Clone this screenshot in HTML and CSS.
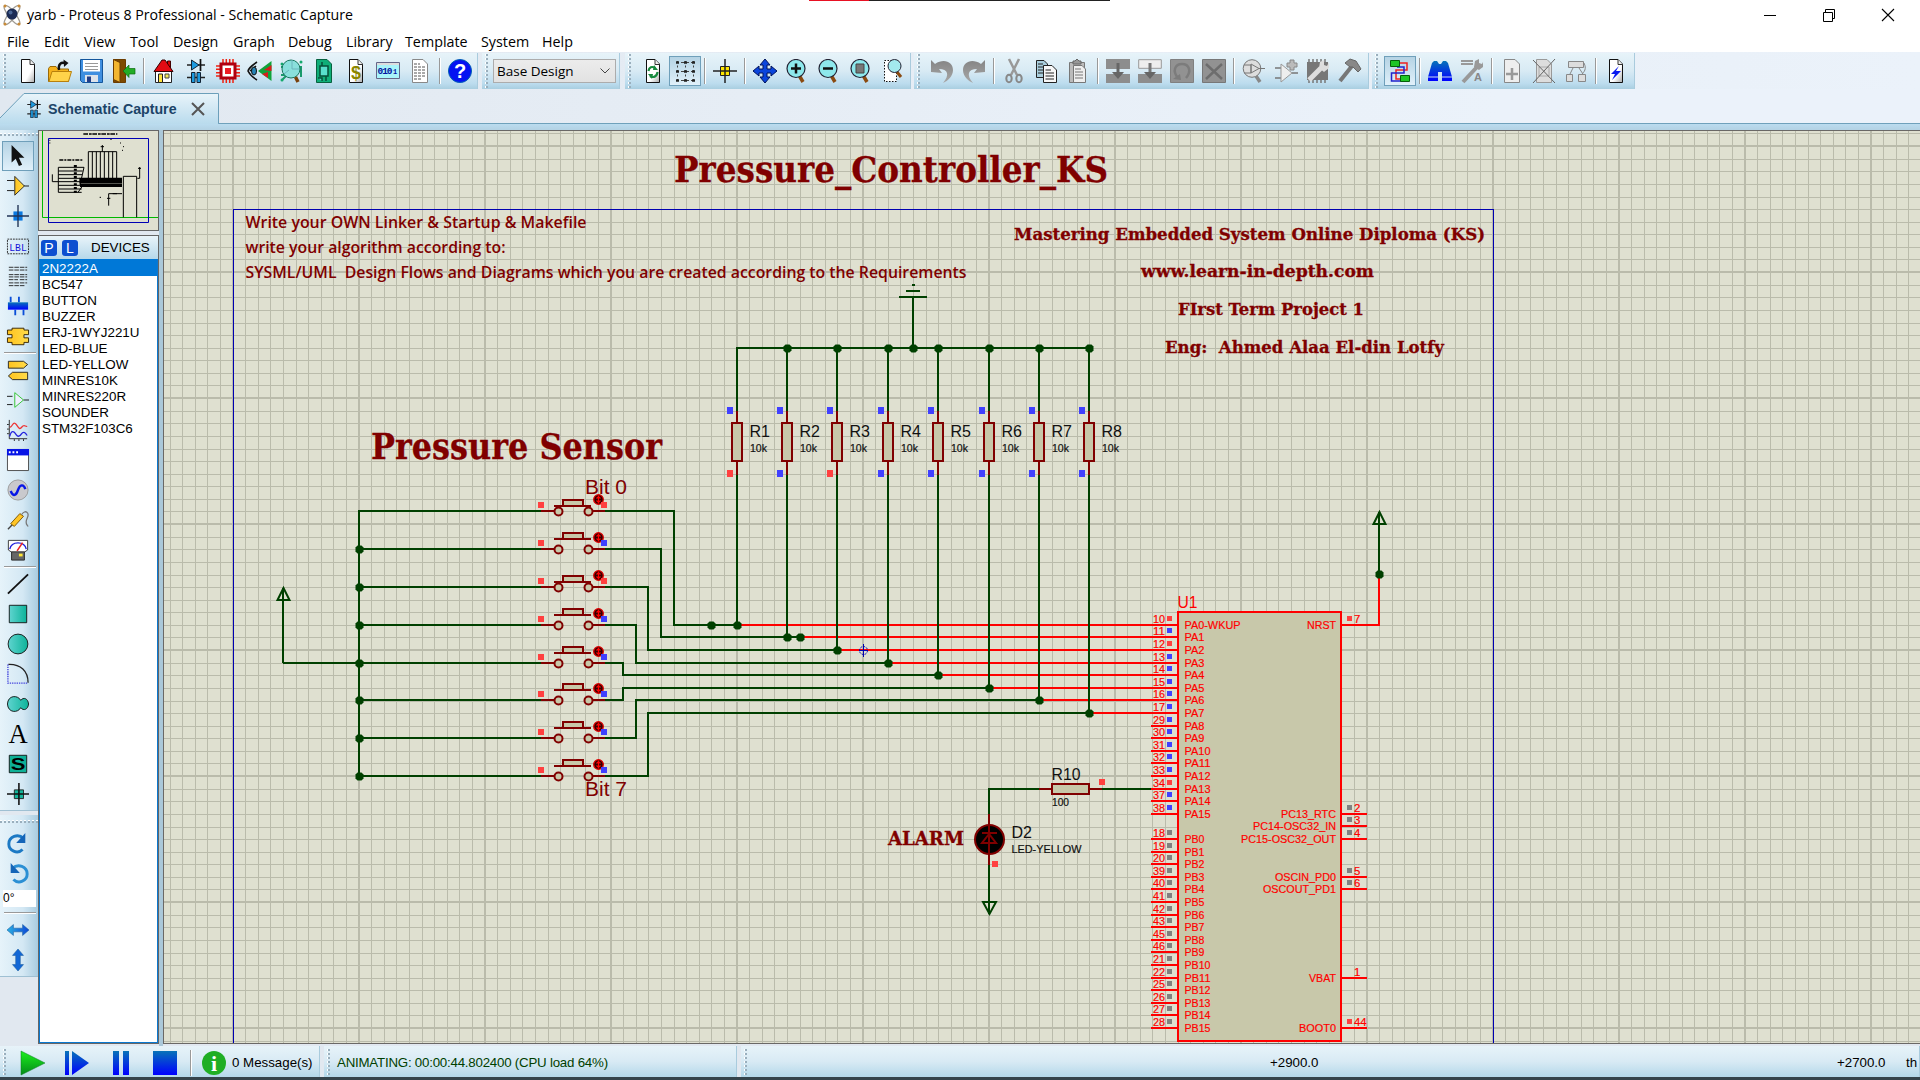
FILE: index.html
```html
<!DOCTYPE html>
<html lang="en">
<head>
<meta charset="utf-8">
<title>yarb - Proteus 8 Professional - Schematic Capture</title>
<link rel="stylesheet" href="styles.css">
</head>
<body>
<svg class="defs" width="0" height="0">
  <defs>
    <linearGradient id="teal"><stop offset="0" stop-color="#5fd4cf"/><stop offset="1" stop-color="#0db39a"/></linearGradient>
    <linearGradient id="gold"><stop offset="0" stop-color="#ffc31f"/><stop offset="1" stop-color="#ffdc4a"/></linearGradient>
    <linearGradient id="blueV" x2="0" y2="1"><stop offset="0" stop-color="#0873b8"/><stop offset="1" stop-color="#0000ff"/></linearGradient>
    <linearGradient id="blueH"><stop offset="0" stop-color="#2bb0e2"/><stop offset="1" stop-color="#0c47d6"/></linearGradient>
    <linearGradient id="greenV" x2="0" y2="1"><stop offset="0" stop-color="#1cf01c"/><stop offset="1" stop-color="#048a1a"/></linearGradient>
    <linearGradient id="grayV" x2="0" y2="1"><stop offset="0" stop-color="#858585"/><stop offset="1" stop-color="#a8a8a8"/></linearGradient>
    <linearGradient id="paper" x2="1" y2="1"><stop offset=".6" stop-color="#fff"/><stop offset="1" stop-color="#aaa"/></linearGradient>
    <symbol id="page" viewBox="0 0 24 24"><path d="M5.500.500H14L18.500 5V23.500H5.500Z" fill="url(#paper)" stroke="#111"/><path d="M14 .500V5.500H18.500" fill="#eee" stroke="#333"/></symbol>
    <symbol id="parts" viewBox="0 0 24 24"><path d="M3 6H21M3 18.500H21" stroke="#222" stroke-width="1.500"/><path d="M7.500 1V11L15 6Z" fill="#1d9be0" stroke="#123"/><path d="M16.500 0V12" stroke="#111" stroke-width="1.700"/><path d="M7.500 13.500H11V23.500H7.500ZM13 13.500H16.500V23.500H13Z" fill="#1d9be0" stroke="#123"/></symbol>
    <symbol id="lens" viewBox="0 0 24 24"><path d="M14.500 17L18 23" stroke="#8a4a10" stroke-width="3.500"/><circle cx="11" cy="9.500" r="9" fill="#8ee8ec" stroke="#223" stroke-width="1.200"/></symbol>
  </defs>
</svg>

<div class="app">
  <header class="titlebar">
    <svg class="logo" viewBox="0 0 20 22"><g fill="none" stroke="#a09c94" stroke-width="1.300"><ellipse cx="10" cy="11" rx="12" ry="3.500" transform="rotate(52 10 11)"/><ellipse cx="10" cy="11" rx="12" ry="3.500" transform="rotate(-52 10 11)"/></g><circle cx="10" cy="10" r="5.500" fill="#1c2c55"/><circle cx="8.500" cy="8.500" r="2" fill="#4a6797"/><g fill="#c98a35"><circle cx="3" cy="2" r="1.500"/><circle cx="17" cy="2" r="1.500"/><circle cx="3" cy="20" r="1.500"/><circle cx="17" cy="20" r="1.500"/></g></svg>
    <span class="caption">yarb - Proteus 8 Professional - Schematic Capture</span>
    <div class="winbtns">
      <svg viewBox="0 0 14 14"><path d="M1 7.500H13" stroke="#000"/></svg>
      <svg viewBox="0 0 14 14"><path d="M1.500 4.500H10.500V13.500H1.500ZM3.500 4V1.500H12.500V10.500H11" fill="none" stroke="#000"/></svg>
      <svg viewBox="0 0 14 14"><path d="M1 1L13 13M13 1L1 13" stroke="#000" stroke-width="1.100"/></svg>
    </div>
    <div class="recorder"></div>
  </header>
  <nav class="menu"><span>File</span><span>Edit</span><span>View</span><span>Tool</span><span>Design</span><span>Graph</span><span>Debug</span><span>Library</span><span>Template</span><span>System</span><span>Help</span></nav>

  <div class="toolbar">
    <div class="group g1"><i class="grip"></i>
      <b><svg viewBox="0 0 24 24"><use href="#page"/></svg></b>
      <b><svg viewBox="0 0 24 24"><path d="M.500 22.500V9.500L2 7.500H8L10 10H20.500V22.500Z" fill="#f5b21c" stroke="#9a6a08"/><path d="M1 22.500L4 12.500H23.500L20.500 22.500Z" fill="#ffd34a" stroke="#b8800c"/><path d="M11 11C10 5 13 3 17 4" fill="none" stroke="#111" stroke-width="2.400"/><path d="M15.500.500L20.500 4L16 8Z" fill="#111"/></svg></b>
      <b><svg viewBox="0 0 24 24"><path d="M.500.500H22.500V23.500H2.500L.500 21.500Z" fill="#3f8fe0" stroke="#14569c"/><path d="M3 1H20V12.500H3Z" fill="#fff"/><path d="M5 4.500H18M5 7.500H18M5 10.500H18" stroke="#999"/><path d="M5 16H18V23H5Z" fill="#dde3ea"/><path d="M7 17.500H11V23H7Z" fill="#223e88"/></svg></b>
      <b><svg viewBox="0 0 24 24"><path d="M1.500.500H13.500V23.500H1.500Z" fill="#7d4a00" stroke="#6b3c00"/><path d="M1.500.500L8 3.500V23.500L1.500 20.500Z" fill="#f2b630" stroke="#6b3c00"/><path d="M11 12L17 6V9.500H23V15H17V18.500Z" fill="#22ad26" stroke="#0b6b10" stroke-width=".7"/></svg></b>
      <u></u>
      <b><svg viewBox="0 0 24 24"><path d="M15.500 2H18.500V9H15.500Z" fill="#d00" stroke="#400"/><path d="M3.500 12H19.500V23.500H3.500Z" fill="#fff" stroke="#222"/><path d="M2 12.500L10 1H13L21 12.500Z" fill="#e30b13" stroke="#300"/><path d="M6.500 15H10.500V23.500H6.500Z" fill="#ffe23a" stroke="#222"/><path d="M13 15H17V19H13Z" fill="#f5e858" stroke="#444"/></svg></b>
      <b><svg viewBox="0 0 24 24"><use href="#parts"/></svg></b>
      <b><svg viewBox="0 0 24 24"><path d="M7 0V24M10.300 0V24M13.700 0V24M17 0V24M0 7H24M0 10.300H24M0 13.700H24M0 17H24" stroke="#e21" stroke-width="1.500"/><path d="M5 5H19V19H5Z" fill="#fff" stroke="#b00010" stroke-width="3"/><path d="M9 9H15V15H9Z" fill="#ee1c24"/></svg></b>
      <b><svg viewBox="0 0 24 24"><path d="M23.500 2V22L10 12Z" fill="#10a33a"/><path d="M23.500 6L16 11L23.500 12ZM14 15L20 13V19Z" fill="#d81c1c"/><path d="M9 3C3 7 0 11 0 12C1 14 4 18 9 21M2 12L8 7" fill="none" stroke="#111" stroke-width="1.600"/><ellipse cx="6" cy="12" rx="2.500" ry="4" fill="#2684b6" stroke="#111"/></svg></b>
      <b><svg viewBox="0 0 24 24"><path d="M1 8H5M1 16H6M2 21L6 17M21 7V18" stroke="#199a6b" stroke-width="2"/><circle cx="2" cy="5" r="1.500" fill="#14a96d"/><circle cx="21" cy="3" r="1.500" fill="#14a96d"/><circle cx="2" cy="21" r="1.500" fill="#14a96d"/><circle cx="11" cy="10" r="9" fill="#8adfdc" stroke="#18765e"/><path d="M12 1V10H19M4 15L9 11" fill="none" stroke="#6db4bd"/><path d="M15.500 18L18 23" stroke="#79410d" stroke-width="3.500"/></svg></b>
      <b><svg viewBox="0 0 24 24"><path d="M4.500.500H15L19.500 5V23.500H4.500Z" fill="#0fae78" stroke="#07623f"/><path d="M8 7H16V17H8ZM10 3V7M14 17V22M6 19H10V22" fill="#59dfcd" stroke="#064f38" stroke-width="1.500"/></svg></b>
      <b><svg viewBox="0 0 24 24"><use href="#page"/><text x="12" y="20" text-anchor="middle" font-size="18" class="bold" fill="#8c8600">$</text></svg></b>
      <b><svg viewBox="0 0 24 24"><path d="M.500 3.500H23.500V19.500H.500Z" fill="#a9f4fa" stroke="#668"/><path d="M1 4H23V6H1Z" fill="#ddd"/><text x="1.500" y="15" font-size="9.500" textLength="15" class="mono" fill="#0414a0">010</text><text x="17" y="15" font-size="7" textLength="5" class="mono" fill="#0414a0">1</text></svg></b>
      <b><svg viewBox="0 0 24 24"><path d="M4.500.500H15L19.500 5V23.500H4.500Z" fill="#fff" stroke="#888"/><path d="M6 5H12M6 8H17M6 11H17M6 14H17M6 17H17M6 20H13" stroke="#555" stroke-dasharray="3 1"/></svg></b>
      <u></u>
      <b><svg viewBox="0 0 24 24"><circle cx="12" cy="12" r="11.500" fill="#0412f2" stroke="#0060b4"/><text x="12" y="19" text-anchor="middle" font-size="20" class="bold" fill="#fff">?</text></svg></b>
    </div>
    <div class="group g2"><i class="grip"></i><div class="combo"><span>Base Design</span><svg viewBox="0 0 10 6"><path d="M.500.500L5 5L9.500.500" fill="none" stroke="#444"/></svg></div></div>
    <div class="group g3"><i class="grip"></i>
      <b><svg viewBox="0 0 24 24"><use href="#page"/><path d="M7.500 12C8 8 11 7 14 9M16.500 13C16 18 12 19 9 17" fill="none" stroke="#188a3e" stroke-width="2.200"/><path d="M13 6L17 11H12ZM11 20L7 15H12Z" fill="#188a3e"/></svg></b>
      <b class="on"><svg viewBox="0 0 24 24"><path d="M3 3.500H22M3 12.500H22M3 21.500H22" stroke="#444" stroke-dasharray="3 2"/><path d="M4.500 2V23M12.500 2V23M20.500 2V23" stroke="#444" stroke-dasharray="2 2.500"/><path d="M3 3.500H6M11 3.500H14M19 3.500H22M3 12.500H6M11 12.500H14M19 12.500H22M3 21.500H6M11 21.500H14M19 21.500H22" stroke="#222" stroke-width="2.500"/></svg></b>
      <u></u>
      <b><svg viewBox="0 0 24 24"><path d="M7.500 7.500H16.500V16.500H7.500Z" fill="#ffe600" stroke="#222"/><path d="M12 0V24M0 12H24" stroke="#222" stroke-width="1.500"/></svg></b>
      <u></u>
      <b><svg viewBox="0 0 24 24"><path d="M12 0L17 6H14V10H18V7L24 12L18 17V14H14V18H17L12 24L7 18H10V14H6V17L0 12L6 7V10H10V6H7Z" fill="#0b45dc" stroke="#00125a"/></svg></b>
      <b><svg viewBox="0 0 24 24"><use href="#lens"/><path d="M6 9.500H16M11 4.500V14.500" stroke="#111" stroke-width="2.500"/></svg></b>
      <b><svg viewBox="0 0 24 24"><use href="#lens"/><path d="M6 9.500H16" stroke="#111" stroke-width="2.500"/></svg></b>
      <b><svg viewBox="0 0 24 24"><use href="#lens"/><path d="M7 5H15V14H7Z" fill="#777" stroke="#444"/></svg></b>
      <b><svg viewBox="0 0 24 24"><path d="M3.500 1.500H15.500V22.500H3.500Z" fill="#fff" stroke="#111" stroke-dasharray="1.500 1.500"/><path d="M16 13L20 18" stroke="#8a4a10" stroke-width="3"/><circle cx="13.500" cy="7" r="6.500" fill="#a3e9ee" stroke="#223"/></svg></b>
    </div>
    <div class="group g4"><i class="grip"></i>
      <b><svg viewBox="0 0 24 24"><path d="M1 1L5 5C14-1 23 3 23 11C23 17 18 22 13 24C20 16 18 10 9 10L12 14L1 13Z" fill="url(#grayV)"/></svg></b>
      <b><svg viewBox="0 0 24 24"><path d="M23 1L19 5C10-1 1 3 1 11C1 17 6 22 11 24C4 16 6 10 15 10L12 14L23 13Z" fill="url(#grayV)"/></svg></b>
      <u></u>
      <b><svg viewBox="0 0 24 24"><path d="M7 0L15 16M17 0L9 16" stroke="#999" stroke-width="2.500"/><g fill="none" stroke="#888" stroke-width="2"><ellipse cx="7" cy="19.500" rx="2.700" ry="3.700"/><ellipse cx="17" cy="19.500" rx="2.700" ry="3.700"/></g></svg></b>
      <b><svg viewBox="0 0 24 24"><g stroke="#222"><path d="M2.500 1.500H10L13.500 5V18.500H2.500Z" fill="#a9cedd"/><path d="M4 5H9M4 8H11M4 11H11M4 14H11"/><path d="M9.500 6.500H18L22.500 11V23.500H9.500Z" fill="#f7f7f7"/><path d="M11.500 11H17M11.500 14H20M11.500 17H20M11.500 20H20"/></g></svg></b>
      <b><svg viewBox="0 0 24 24"><path d="M3.500 3.500H18.500V23.500H3.500Z" fill="#bbb" stroke="#777"/><path d="M7 5V2H9L11 0L13 2H15V5Z" fill="#999" stroke="#666"/><path d="M7.500 6.500H16L19.500 10V23.500H7.500Z" fill="#eee" stroke="#777"/><path d="M9 10H15M9 13H17M9 16H17M9 19H17" stroke="#777"/></svg></b>
      <u></u>
      <b><svg viewBox="0 0 24 24"><path d="M0 0H24V10H0ZM0 15H24V24H0Z" fill="#8d8d8d"/><path d="M12 4V14" stroke="#666" stroke-width="3"/><path d="M6 13H18L12 20Z" fill="#666"/></svg></b>
      <b><svg viewBox="0 0 24 24"><path d="M.700.700H23.300V9.300H.700Z" fill="#eee" stroke="#999"/><path d="M0 15H24V24H0Z" fill="#8d8d8d"/><path d="M12 4V14" stroke="#777" stroke-width="3"/><path d="M6 13H18L12 20Z" fill="#666"/></svg></b>
      <b><svg viewBox="0 0 24 24"><path d="M.500.500H23.500V23.500H.500Z" fill="#929292" stroke="#808080"/><path d="M8 19C2 12 5 5 12 5S22 12 16 19" fill="none" stroke="#7c7c7c" stroke-width="2.500"/><path d="M3 20L11 21L10 15Z" fill="#7c7c7c"/></svg></b>
      <b><svg viewBox="0 0 24 24"><path d="M.500.500H23.500V23.500H.500Z" fill="#929292" stroke="#777"/><path d="M4 5L20 20M20 5L4 20" stroke="#6d6d6d" stroke-width="2.500"/></svg></b>
      <u></u>
      <b><svg viewBox="0 0 24 24"><path d="M14 17L18 23" stroke="#888" stroke-width="3.500"/><circle cx="10" cy="9.500" r="8.800" fill="#ddd" stroke="#777"/><path d="M2 6H9V14H2M9 5L17 9.500L9 14ZM17 9.500H23" fill="none" stroke="#777"/></svg></b>
      <b><svg viewBox="0 0 24 24"><path d="M1 9H7M1 19H7M18 14H24" stroke="#777" stroke-width="1.500"/><path d="M7 5V23L18 14Z" fill="#eee" stroke="#999"/><path d="M16 1H20V4H23V8H20V11H16V8H13V4H16Z" fill="#bbb" stroke="#888"/></svg></b>
      <b><svg viewBox="0 0 24 24"><path d="M3 0V24M7 0V24M11 0V24M15 0V24M19 0V24" stroke="#777" stroke-width="1.500"/><path d="M1 3H22V21H1Z" fill="#777"/><path d="M3 21L15 9" stroke="#ddd" stroke-width="5"/><path d="M13 9L14 3L18 1V6L21 7L23 3V9L18 13Z" fill="#ddd"/></svg></b>
      <b><svg viewBox="0 0 24 24"><path d="M2 22L14 7" stroke="#777" stroke-width="4"/><path d="M7 4L12 0L18 2L23 10L20 13L15 8L12 8Z" fill="#888" stroke="#666"/></svg></b>
    </div>
    <div class="group g5"><i class="grip"></i>
      <b class="on"><svg viewBox="0 0 24 24"><path d="M10 4H19V11H8V20H13" fill="none" stroke="#e22" stroke-width="1.500"/><path d="M9 8H16V14H3.500V22H13" fill="none" stroke="#22c" stroke-width="1.500"/><path d="M2.500 1.500H11.500V7.500H2.500ZM12.500 16.500H21.500V22.500H12.500Z" fill="#1fc626" stroke="#055e0a"/></svg></b>
      <u></u>
      <b><svg viewBox="0 0 24 24"><path d="M0 18L4 4L6 2H9L11 5H13L15 2H18L20 4L24 18V22H14V13H10V22H0Z" fill="url(#blueV)"/><path d="M0 18H10M14 18H24" stroke="#cde"/></svg></b>
      <b><svg viewBox="0 0 24 24"><path d="M1 2H13M1 5H13" stroke="#999" stroke-width="2.200"/><path d="M3 23L17 8" stroke="#999" stroke-width="4"/><path d="M14 8L15 2L19 0V4L22 5L23 3V8L19 11Z" fill="#999"/><text x="14" y="22" font-size="11" class="bold" fill="#888">A</text></svg></b>
      <u></u>
      <b><svg viewBox="0 0 24 24"><path d="M4.500.500H15L19.500 5V23.500H4.500Z" fill="#eee" stroke="#888"/><path d="M12 9V21M6 15H18" stroke="#999" stroke-width="2.500"/></svg></b>
      <b><svg viewBox="0 0 24 24"><path d="M4.500.500H15L19.500 5V23.500H4.500Z" fill="#ddd" stroke="#999"/><path d="M7 8H17V17H7Z" fill="none" stroke="#aaa"/><path d="M1 1L23 24M23 0L1 24" stroke="#666"/></svg></b>
      <b><svg viewBox="0 0 24 24"><path d="M4.500 2.500H19.500V8.500H4.500ZM2.500 15.500H8.500V22.500H2.500ZM14.500 15.500H21.500V22.500H14.500ZM6 15L9 9M19 15L15 9" fill="#ddd" stroke="#888"/><path d="M20 4C23 10 20 13 18 15" fill="none" stroke="#888"/></svg></b>
      <u></u>
      <b><svg viewBox="0 0 24 24"><use href="#page"/><path d="M15 7L7 15H11L8 21L17 12H12Z" fill="#0718ef"/></svg></b>
    </div>
  </div>

  <div class="tabs">
    <svg class="tabshape" viewBox="0 0 220 36"><defs><linearGradient id="tabfill" x2="0" y2="1"><stop offset="0" stop-color="#e9f4fa"/><stop offset="1" stop-color="#b9dbed"/></linearGradient></defs><path d="M0 35V29L24 4.500H218.500V35Z" fill="url(#tabfill)"/><path d="M0 29L24 4.500H218.500V34.500H220" fill="none" stroke="#6c9fba"/></svg>
    <div class="tablabel"><svg viewBox="0 0 24 24" width="18" height="20"><use href="#parts"/></svg><span>Schematic Capture</span><svg class="x" viewBox="0 0 14 14"><path d="M1 1L13 13M13 1L1 13" stroke="#555" stroke-width="2"/></svg></div>
  </div>

  <main class="work">
    <aside class="modes">
      <div class="column main"><i class="hgrip"></i>
        <b class="on"><svg viewBox="0 0 24 24"><path d="M5 0V19L9.500 15L13 23L16.500 21.500L13 14H19Z" fill="#111"/></svg></b>
        <b><svg viewBox="0 0 24 24"><path d="M0 6H8M0 17H8M18 12H24" stroke="#111"/><path d="M8.500 1.500V22L19 12Z" fill="url(#gold)" stroke="#222"/></svg></b>
        <b><svg viewBox="0 0 24 24"><path d="M7 7H17V17H7Z" fill="#0a78e0"/><path d="M12 0V24M0 12H24" stroke="#235" stroke-width="1.500"/></svg></b>
        <b><svg viewBox="0 0 24 24"><path d="M.500 4.500H23.500V20.500H.500Z" fill="none" stroke="#222" stroke-dasharray="2 1"/><text x="2.500" y="17" font-size="12" textLength="19" lengthAdjust="spacingAndGlyphs" class="mono thin" fill="#1212d8">LBL</text></svg></b>
        <b><svg viewBox="0 0 24 24"><path d="M2 2.500H22M2 5.500H22M2 10.500H22M2 13H22M2 16H12M14 16H22M2 19.500H22M2 22.500H20" stroke="#222" stroke-dasharray="5 1"/></svg></b>
        <b><svg viewBox="0 0 24 24"><path d="M4 2V8M13 2V8M9 16V22M18 16V22" stroke="#0a4ed8" stroke-width="2"/><path d="M1 8H23V16H1Z" fill="url(#blueV)"/></svg></b>
        <b><svg viewBox="0 0 24 24"><path d="M5.500 3.500H18.500V5.500H23.500V10.500H18.500V14H23.500V19H18.500V21.500H5.500V19H.500V14H5.500V10.500H.500V5.500H5.500Z" fill="url(#gold)" stroke="#332200"/></svg></b>
        <u></u>
        <b><svg viewBox="0 0 24 24"><path d="M1.500 2.500H18L22.500 6L18 10H1.500ZM22.500 14.500H6L1.500 18.500L6 22.500H22.500Z" fill="url(#gold)" stroke="#222"/></svg></b>
        <b><svg viewBox="0 0 24 24"><path d="M0 8H6M0 17H6M18 12H24" stroke="#111"/><path d="M8.500 4V20L18 12Z" fill="#eef" stroke="#2ac42a"/></svg></b>
        <b><svg viewBox="0 0 24 24"><path d="M2.500 1V21.500H22M0 6H2M0 11H2M0 16H2M8 22V24M13 22V24M18 22V24" fill="none" stroke="#222"/><path d="M3 9C6 9 6 3 9 5S13 13 16 9S20 9 22 8" fill="none" stroke="#e33" stroke-width="1.400"/><path d="M3 19C5 11 8 14 10 17S14 19 16 16S20 15 22 18" fill="none" stroke="#22d" stroke-width="1.400"/></svg></b>
        <b><svg viewBox="0 0 24 24"><path d="M.500.500H23.500V23.500H.500Z" fill="#fff" stroke="#444"/><path d="M0 0H24V7H0Z" fill="#0714e6"/><path d="M2 3.500H4M6 3.500H8M10 3.500H12" stroke="#fff" stroke-width="2"/></svg></b>
        <b><svg viewBox="0 0 24 24"><circle cx="12" cy="12" r="11" fill="#c9c9cd" stroke="#999"/><path d="M4 13C7 20 10 18 12 12S18 5 20 11" fill="none" stroke="#0716e6" stroke-width="2.600"/></svg></b>
        <b><svg viewBox="0 0 24 24"><path d="M1 22L6 17" stroke="#444" stroke-width="1.500"/><path d="M4 16L14 5L18 8L8 19Z" fill="#ffc526" stroke="#7a5200"/><path d="M16 6C20 0 25 4 22 10S22 17 23 19" fill="none" stroke="#777" stroke-width="1.400"/></svg></b>
        <b><svg viewBox="0 0 24 24"><path d="M1.500 1.500H22.500V12L18 15H6L1.500 12Z" fill="#fff" stroke="#333"/><path d="M3 11C5 2 19 2 21 11" fill="none" stroke="#22d" stroke-width="1.500"/><path d="M11 13L17 4" stroke="#e22" stroke-width="1.700"/><path d="M5 14H19V23H5Z" fill="#666" stroke="#222"/><path d="M13 16H17V19H13Z" fill="#ffe634"/></svg></b>
        <u></u>
        <b><svg viewBox="0 0 24 24"><path d="M1 22.500L23 1.500" stroke="#111" stroke-width="2"/></svg></b>
        <b><svg viewBox="0 0 24 24"><path d="M2.500 2.500H21.500V21.500H2.500Z" fill="url(#teal)" stroke="#111"/></svg></b>
        <b><svg viewBox="0 0 24 24"><circle cx="12" cy="12" r="10.800" fill="url(#teal)" stroke="#111"/></svg></b>
        <b><svg viewBox="0 0 24 24"><path d="M1.500 1.500C15 1 23 9 23 21.500" fill="none" stroke="#222" stroke-width="1.400"/><path d="M1 1.500V22H23" fill="none" stroke="#44d" stroke-width="1.500" stroke-dasharray="1.500 1"/></svg></b>
        <b><svg viewBox="0 0 24 24"><path d="M15 8C18 4 23 6 23.500 12C23 18 18 20 15 16C12 22 1 22 .500 12C1 2 12 2 15 8Z" fill="url(#teal)" stroke="#111"/></svg></b>
        <b><svg viewBox="0 0 24 24"><text x="12" y="22" text-anchor="middle" font-size="29" class="serif" fill="#000">A</text></svg></b>
        <b><svg viewBox="0 0 24 24"><path d="M2.500 2.500H21.500V21.500H2.500Z" fill="#0eb096" stroke="#111"/><text x="4" y="19" font-size="19" textLength="16" lengthAdjust="spacingAndGlyphs" class="bold" fill="#000">S</text></svg></b>
        <b><svg viewBox="0 0 24 24"><path d="M8 7.500H18V17H8Z" fill="#14b49b" stroke="#222"/><path d="M13 0V24M0 12H24" stroke="#111" stroke-width="1.700"/></svg></b>
      </div>
      <div class="column rotate"><i class="hgrip"></i>
        <b><svg viewBox="0 0 24 24"><path d="M17 19C11 25 2 20 2 13C2 5 12 1 18 7" fill="none" stroke="#1c79c4" stroke-width="3.200"/><path d="M20 1V12H10Z" fill="#1565b8"/></svg></b>
        <b><svg viewBox="0 0 24 24"><path d="M7 19C13 25 22 20 22 13C22 5 12 1 6 7" fill="none" stroke="#2b8fd4" stroke-width="3.200"/><path d="M4 1V12H14Z" fill="#1565b8"/></svg></b>
        <div class="angle">0°</div>
        <u></u>
        <b><svg viewBox="0 0 24 24"><path d="M0 12L7 6V10H17V6L24 12L17 18V14H7V18Z" fill="url(#blueH)" stroke="#175a9c" stroke-width=".6"/></svg></b>
        <b><svg viewBox="0 0 24 24"><path d="M12 0L18 7H14.500V17H18L12 24L6 17H9.500V7H6Z" fill="#1267d6" stroke="#175a9c" stroke-width=".6"/></svg></b>
      </div>
    </aside>

    <aside class="side">
      <svg class="overview" viewBox="117 18 357 297">
        <path d="M127.500 18V277.500H474" fill="none" stroke="#00b800" stroke-width="3"/>
        <path d="M145.500 40.500H445.500V292.500H145.500Z" fill="none" stroke="#0000b4" stroke-width="3"/>
        <g fill="none" stroke="#000" stroke-width="3">
          <path d="M250 27H352" stroke-width="5" stroke-dasharray="14 3 8 2"/><path d="M178 105H250" stroke-width="4" stroke-dasharray="12 3 6 3"/>
          <path d="M265 160V80H350V160M277 80V160M289 80V160M301 80V160M313 80V160M326 80V160M338 80V160M307 80V60M302 65H312"/>
          <path d="M252 127H175V202H245M175 138H248M175 149H246M175 160H240M175 170H240M175 181H240M175 192H245M157 148V170H175"/>
          <path d="M226 120V204" stroke-width="9" stroke-dasharray="6 5"/><path d="M238 167H366" stroke-width="17"/><path d="M240 181H366" stroke-width="10"/><path d="M240 180L252 127M234 202L246 185" stroke-width="3"/>
          <path d="M370 277V154H410V277M412 160H419V126M414 130H423M366 206H326V242M321 220H331"/><path d="M299 217H303M331 43H335M360 54H363M369 65H372M366 76H369M148 46H151M148 54H151M351 206H338"/>
        </g>
      </svg>
      <section class="devices">
        <div class="head"><em>P</em><em>L</em><span>DEVICES</span></div>
        <ul><li class="sel">2N2222A</li><li>BC547</li><li>BUTTON</li><li>BUZZER</li><li>ERJ-1WYJ221U</li><li>LED-BLUE</li><li>LED-YELLOW</li><li>MINRES10K</li><li>MINRES220R</li><li>SOUNDER</li><li>STM32F103C6</li></ul>
      </section>
    </aside>
    <div class="splitter"></div>
    <svg class="sheet" id="sheet" viewBox="164 131 1756 912" preserveAspectRatio="xMinYMin slice"></svg>
  </main>

  <footer class="status">
    <div class="run"><i class="grip"></i>
      <svg viewBox="0 0 24 24"><path d="M0 0L24 12L0 24Z" fill="url(#greenV)" stroke="#0a7a20" stroke-width=".5"/></svg>
      <svg viewBox="0 0 24 24"><path d="M0 0H4V24H0ZM7 0L24 12L7 24Z" fill="url(#blueV)"/></svg>
      <svg viewBox="0 0 24 24"><path d="M4 0H10V24H4ZM14 0H20V24H14Z" fill="url(#blueV)"/></svg>
      <svg viewBox="0 0 24 24"><path d="M0 0H24V24H0Z" fill="url(#blueV)"/></svg>
      <u></u>
      <svg class="info" viewBox="0 0 24 24"><circle cx="12" cy="12" r="12" fill="#1fae24"/><text x="12" y="20" text-anchor="middle" font-size="22" class="serif bold" fill="#fff">i</text></svg>
      <span>0 Message(s)</span>
    </div>
    <div class="anim"><i class="grip"></i><span>ANIMATING: 00:00:44.802400 (CPU load 64%)</span></div>
    <div class="coords"><i class="grip"></i><span class="cx">+2900.0</span><span class="cy">+2700.0</span><span class="unit">th</span></div>
  </footer>
  <div class="taskbar"></div>
</div>
<script src="script.js"></script>
</body>
</html>
```
FILE: styles.css
```css
* { box-sizing: border-box; }
body { margin: 0; overflow: hidden; background: #fff; font-family: "Open Sans", "Noto Sans", sans-serif; color: #000; }
.defs { position: absolute; }
.app { width: 1920px; height: 1080px; display: flex; flex-direction: column; }
svg { display: block; flex: none; }
b { font-weight: normal; }
b svg, .run svg { overflow: visible; }
.bold { font-weight: bold; font-family: "Liberation Sans", sans-serif; }
.mono { font-family: "Liberation Mono", monospace; font-weight: bold; }
.thin { font-weight: normal; }
.serif { font-family: "Liberation Serif", serif; }

.titlebar { height: 27px; flex: none; display: flex; align-items: center; position: relative; padding: 2px 0 0 2px; }
.logo { width: 20px; height: 22px; overflow: hidden; }
.caption { margin-left: 5px; font-size: 14.200px; white-space: nowrap; }
.winbtns { margin-left: auto; display: flex; gap: 45px; padding-right: 25px; }
.winbtns svg { width: 14px; height: 14px; }
.recorder { position: absolute; left: 809px; top: 0; width: 301px; height: 1px; background: linear-gradient(90deg, #e81123 60px, #222 60px); }

.menu { height: 25px; flex: none; display: grid; grid-template-columns: 37px 40px 46px 43px 60px 55px 58px 59px 76px 61px 60px; padding-left: 7px; font-size: 14.300px; line-height: 29px; white-space: nowrap; }

.toolbar { height: 37px; flex: none; display: flex; padding-top: 1px; background: linear-gradient(90deg, #e1e8f0, #ebf2fa); }
.group { height: 36px; display: flex; align-items: center; background: linear-gradient(#e7f3f9, #d8eaf4 50%, #bcdcee 85%, #a9cee0); border-right: 1px solid #a9cbdd; }
.g1 { width: 478px; margin-right: 4px; }
.g2 { width: 138px; margin-right: 5px; }
.g3 { width: 286px; margin-right: 3px; }
.g4 { width: 455px; margin-right: 3px; }
.g5 { width: 263px; }
.group b { width: 32px; height: 30px; display: flex; align-items: center; justify-content: center; flex: none; }
.group b svg { width: 24px; height: 24px; }
.on { border: 1px solid #6f9fba; background: linear-gradient(#b5d3e4, #e0f0fa); }
.group u, .run u { width: 1px; height: 26px; margin: 0 4px 0 3px; background: #999; box-shadow: 1px 0 #fff; flex: none; }
.grip { width: 12px; height: 34px; flex: none; background: linear-gradient(90deg, transparent 3px, #fff 3px 4px, #9aafbd 4px 6px, transparent 6px); -webkit-mask: repeating-linear-gradient(#000 0 2px, transparent 2px 4px); mask: repeating-linear-gradient(#000 0 2px, transparent 2px 4px); }
.combo { width: 123px; height: 24px; margin-left: -1px; border: 1px solid #acacac; background: linear-gradient(#ececec, #e2e2e2); display: flex; align-items: center; justify-content: space-between; padding: 0 5px 0 3px; font-size: 13.500px; }
.combo svg { width: 10px; height: 6px; }

.tabs { height: 35px; flex: none; position: relative; background: linear-gradient(90deg, #e1e8f0, #ebf2fa 1500px); border-bottom: 1px solid #6fa1bb; }
.tabshape { width: 220px; height: 36px; position: absolute; left: 0; top: 0; }
.tablabel { position: relative; display: flex; align-items: center; height: 39px; padding-left: 25px; font: bold 14.200px "Liberation Sans", sans-serif; color: #1c4468; }
.tablabel span { margin-left: 5px; width: 130px; white-space: nowrap; }
.tablabel .x { width: 14px; height: 14px; margin-left: 13px; }

.work { height: 922px; flex: none; display: flex; background: linear-gradient(#bbdcef, #b3d2e4 6px, #e1e8f0 6px); padding-top: 6px; }
.modes { width: 38px; flex: none; }
.column { width: 38px; display: flex; flex-direction: column; background: linear-gradient(90deg, #e6f3fa, #d4e8f4 60%, #a9cce0); border-bottom: 1px solid #9fc0d3; }
.main { height: 681px; }
.rotate { height: 162px; margin-top: 4px; padding-top: 2px; }
.hgrip { height: 11px; flex: none; background: linear-gradient(transparent 3px, #fff 3px 4px, #9aafbd 4px 6px, transparent 6px); -webkit-mask: repeating-linear-gradient(90deg, #000 0 2px, transparent 2px 4px); mask: repeating-linear-gradient(90deg, #000 0 2px, transparent 2px 4px); }
.column b { width: 32px; height: 30px; margin-left: 2px; display: flex; align-items: center; justify-content: center; flex: none; }
.column b svg { width: 24px; height: 22px; }
.column u { width: 32px; height: 1px; margin: 1px 0 2px 4px; background: #999; box-shadow: 0 1px #fff; flex: none; }
.angle { width: 33px; height: 17px; margin: 2px 0 4px 3px; background: #fff; font: 12px/17px "Liberation Sans", sans-serif; flex: none; }

.side { width: 121px; flex: none; }
.overview { width: 121px; height: 101px; background: #dfe0d0; border: 1px solid #666; }
.devices { margin-top: 4px; height: 809px; border: 1px solid #666; background: #fff; font: 13.400px/16px "Liberation Sans", sans-serif; display: flex; flex-direction: column; }
.head { height: 23px; display: flex; align-items: center; background: linear-gradient(#e9f4fa, #b6d8ea); padding: 0 0 0 2px; flex: none; }
.head em { width: 16px; height: 16px; margin-right: 5px; border-radius: 3px; background: #0d4fd0; color: #fff; font: 14px/16px "Liberation Sans", sans-serif; text-align: center; }
.head span { margin-left: 8px; }
.devices ul { list-style: none; margin: 0; padding: 0 1px; border: 1px solid #0b78cf; border-top: 0; flex: 1; }
.devices li { padding-left: 1px; white-space: nowrap; position: relative; top: 1px; }
.devices .sel { background: #0078d7; color: #fff; height: 17px; line-height: 19px; margin: 0 -1px; padding-left: 2px; top: 0; }
.splitter { width: 4px; flex: none; background: #abc8d9; }
.sheet { width: 1757px; height: 914px; border: 1px solid #6a6866; border-right: 0; background: #dfe0d0; overflow: hidden; }

.wire { fill: none; stroke: #004000; stroke-width: 2; shape-rendering: crispEdges; }
.hot { fill: none; stroke: #f00; stroke-width: 2; shape-rendering: crispEdges; }
.part { fill: #c8c8aa; stroke: #800000; stroke-width: 2; }
.lead { fill: none; stroke: #800000; stroke-width: 2; shape-rendering: crispEdges; }
.crisp { shape-rendering: crispEdges; }
.ref { font: 16px "Liberation Sans", sans-serif; fill: #111; }
.val { font: 11px "Liberation Sans", sans-serif; fill: #111; stroke: #111; stroke-width: .2px; }
.pin { font: 11.400px "Liberation Sans", sans-serif; fill: #f00; stroke: #f00; stroke-width: .2px; }
.slab { font-family: "DejaVu Serif", serif; font-weight: bold; fill: #800000; stroke: #800000; stroke-width: .3px; }
.note { font: 600 17px "Open Sans", sans-serif; fill: #800000; white-space: pre; }
.bit { font: 20px "Liberation Sans", sans-serif; fill: #800000; }

.status { height: 31px; flex: none; display: flex; background: #e1e8f0; font: 13.300px "Liberation Sans", sans-serif; }
.status > div { display: flex; align-items: center; background: linear-gradient(#e7f3f9, #d8eaf4 50%, #b4d8ea); border-right: 1px solid #a9cbdd; white-space: nowrap; padding-top: 2px; }
.status .grip { height: 28px; }
.run { width: 320px; margin-right: 4px; }
.run svg { width: 24px; height: 24px; margin: 0 11px 0 9px; }
.run u { margin-left: 2px; }
.run .info { margin: 0 6px 0 7px; }
.anim { width: 413px; margin-right: 4px; color: #004000; }
.anim span { margin-left: 1px; letter-spacing: -.22px; }
.coords { flex: 1; }
.cx { margin-left: 517px; width: 567px; }
.cy { width: 69px; }
.taskbar { height: 3px; background: #35444c; flex: none; }
```
FILE: script.js
```js
const out = [];
const put = (s) => out.push(s);
const path = (cls, d) => put(`<path class="${cls}" d="${d}"/>`);
const probe = (x, y, c, w = 6, h = 6) => put(`<rect class="crisp" x="${x}" y="${y}" width="${w}" height="${h}" fill="${c}"/>`);
const text = (cls, x, y, s, len, extra = "") =>
  put(`<text class="${cls}" x="${x}" y="${y}" ${len ? `textLength="${len}" lengthAdjust="spacingAndGlyphs"` : ""} ${extra}>${s}</text>`);
const dot = (x, y) => put(`<path fill="#004000" d="M${x - 2} ${y - 4}h4l2 2v4l-2 2h-4l-2-2v-4Z"/>`);
const RED = "#ff4040", BLUE = "#4040ff", GRAY = "#808080";

/* grid: ten minor divisions in every 126px major cell */
const xo = [12, 25, 37, 50, 63, 75, 88, 100, 113];
const yo = [13, 25, 38, 51, 63, 76, 88, 101, 113];
let minor = "", major = "";
for (let m = 107; m < 1920; m += 126) {
  major += `M${m} 131V1043`;
  xo.forEach((o) => (minor += `M${m + o + 0.5} 131V1043`));
}
for (let m = 20; m < 1043; m += 126) {
  major += `M164 ${m}H1920`;
  yo.forEach((o) => (minor += `M164 ${m + o + 0.5}H1920`));
}
put(`<g fill="none" stroke="#babbab" class="crisp"><path d="${minor}"/><path d="${major}" stroke-width="2"/></g>`);
put('<path class="crisp" d="M233.500 1043V209.500H1493.500V1043" fill="none" stroke="#0000b0"/>');

/* headings and notes */
text("slab", 674, 181.5, "Pressure_Controller_KS", 434, 'font-size="34.500"');
text("slab", 371, 458.5, "Pressure Sensor", 291, 'font-size="35"');
text("slab", 888, 844.5, "ALARM", 76, 'font-size="19"');
text("slab", 1014, 239.500, "Mastering Embedded System Online Diploma (KS)", 471, 'font-size="17.500"');
text("slab", 1141, 276.500, "www.learn-in-depth.com", 233, 'font-size="17.500"');
text("slab", 1178, 314.500, "FIrst Term Project 1", 186, 'font-size="17.500"');
text("slab", 1165, 352.500, "Eng:&#160; Ahmed Alaa El-din Lotfy", 279, 'font-size="17.500"');
text("note", 245.5, 227.5, "Write your OWN Linker &amp; Startup &amp; Makefile", 341);
text("note", 245.5, 252.5, "write your algorithm according to:", 260);
text("note", 245.5, 277.5, "SYSML/UML&#160; Design Flows and Diagrams which you are created according to the Requirements", 721);
text("bit", 585, 493.5, "Bit 0", 42);
text("bit", 585, 795.5, "Bit 7", 42);

/* pull-down resistors */
const busY = [625, 637, 650, 663, 675, 688, 700, 713];
const resX = [737, 787, 837, 888, 938, 989, 1039, 1089];
busY.forEach((y, i) => path("hot", `M${resX[i]} ${y}H1178`));
path("wire", "M736 348H1090M913 297V348M899 297H927M906 291H920M912 285H915");
resX.forEach((x, i) => {
  path("wire", `M${x} 348V411M${x} 475V${busY[i]}`);
  path("lead", `M${x} 411V475`);
  put(`<rect class="part crisp" x="${x - 5}" y="423" width="10" height="38"/>`);
  probe(x - 10, 407, BLUE, 6, 7);
  probe(x - 10, 470, i === 0 || i === 2 ? RED : BLUE, 6, 7);
  text("ref", x + 12.5, 437, "R" + (i + 1), 20.5);
  text("val", x + 13, 452, "10k", 17);
});

/* push buttons and their runs to the port */
const rowY = [511, 549, 587, 625, 663, 700, 738, 776];
const turnX = [674, 661, 648, 636, 623, 623, 636, 648];
path("wire", "M359 510V777M283 663H359M283 663V588M277.500 600H289.500");
rowY.forEach((y, i) => {
  path("wire", `M359 ${y}H541M605 ${y}H${turnX[i]}V${busY[i]}H${resX[i]}`);
  path("lead", `M541 ${y}H554M592 ${y}H605`);
  const closed = i === 0 || i === 2;
  const bar = closed ? y - 5 : y - 10;
  path("lead", `M554 ${bar}H591`);
  put(`<rect class="part crisp" x="563" y="${bar - 6}" width="20" height="6"/>`);
  if (closed) put(`<path class="part" d="M555 ${bar + 4}l3-4M590 ${bar + 4}l-3-4"/>`);
  put(`<circle class="part" cx="558.500" cy="${y + 0.5}" r="4"/><circle class="part" cx="588.500" cy="${y + 0.5}" r="4"/>`);
  put(`<circle cx="598.500" cy="${y - 11.500}" r="4.800" fill="#300" stroke="#e00000" stroke-width="1.300"/><path d="M598.500 ${y - 15.500}v8m-2-5l2-2l2 2m-4 2l2 2l2-2" fill="none" stroke="#f00" stroke-width="1.200"/>`);
  probe(538, y - 9, RED);
  probe(601, y - 9, closed ? RED : BLUE);
  if (i) dot(359.5, y + 0.5);
});
resX.forEach((x, i) => { dot(x + 0.5, busY[i] + 0.5); if (i) dot(x + 0.5, 348.5); });
dot(913.5, 348.5);
dot(711.5, 625.5);
path("wire", "M787 637H800");
dot(800.5, 637.5);
put('<path d="M283.500 588L277.500 600H289.500Z" fill="none" stroke="#004000" stroke-width="2"/>');
put('<g fill="none" stroke="#0000b0"><circle cx="863.500" cy="650.500" r="4" stroke-dasharray="2 1"/><path d="M863.500 644V657M859 650.500H868"/></g>');

/* alarm LED branch */
path("wire", "M1039 789H989V814M1102 789H1152M989 865V914");
path("lead", "M1039 789H1102M989 814V865");
put('<rect class="part crisp" x="1052" y="784" width="37" height="10"/>');
put('<circle cx="989.500" cy="839.500" r="14.500" fill="#000" stroke="#800000" stroke-width="2"/><path d="M989 824V855M982 833H997M989 834L982 843H996Z" fill="none" stroke="#800000" stroke-width="2"/>');
put('<path d="M983 902H996L989.500 914Z" fill="none" stroke="#004000" stroke-width="2"/>');
probe(1099, 779, RED);
probe(992, 861, RED);
text("ref", 1051.5, 780, "R10", 29);
text("val", 1052, 806, "100", 17);
text("ref", 1011.5, 838, "D2", 20.5);
text("val", 1011.5, 853, "LED-YELLOW", 70);

/* microcontroller */
put('<rect class="crisp" x="1178" y="612" width="163" height="429" fill="#c8c8aa" stroke="#f00" stroke-width="2"/>');
text("ref", 1177.5, 608, "U1", 20, 'style="fill:#f00"');
const numbers = [10, 11, 12, 13, 14, 15, 16, 17, 29, 30, 31, 32, 33, 34, 37, 38, 18, 19, 20, 39, 40, 41, 42, 43, 45, 46, 21, 22, 25, 26, 27, 28];
const pinY = [...busY, 726, 738, 751, 763, 776, 789, 801, 814, 839, 852, 864, 877, 889, 902, 915, 927, 940, 952, 965, 978, 990, 1003, 1015, 1028];
numbers.forEach((n, i) => {
  const y = pinY[i];
  const name = i < 16 ? "PA" + i + (i ? "" : "-WKUP") : "PB" + (i - 16);
  const w = i ? (name.length === 3 ? 20 : 26) : 56;
  path("hot", `M1151 ${y}H1178`);
  text("pin", 1153, y - 2, n, 12);
  text("pin", 1184.5, y + 4, name, w);
  probe(1167, y - 9, i > 15 ? GRAY : [0, 2, 13].includes(i) ? RED : BLUE, 5, 5);
});
[["NRST", 625, 7, RED, 29], ["PC13_RTC", 814, 2, GRAY, 55], ["PC14-OSC32_IN", 826, 3, GRAY, 83], ["PC15-OSC32_OUT", 839, 4, GRAY, 95],
 ["OSCIN_PD0", 877, 5, GRAY, 61], ["OSCOUT_PD1", 889, 6, GRAY, 73], ["VBAT", 978, 1, null, 27], ["BOOT0", 1028, 44, RED, 37]].forEach(([s, y, n, c, w]) => {
  path("hot", `M1342 ${y}H1367`);
  text("pin", 1336 - w, y + 4, s, w);
  text("pin", 1354, y - 2, n);
  if (c) probe(1347, y - 9, c, 5, 5);
});
path("hot", "M1360 625H1379V574");
path("wire", "M1379 574V512");
put('<path d="M1379.500 512L1373.500 524H1385.500Z" fill="none" stroke="#004000" stroke-width="2"/>');
dot(1379.5, 574.5);

document.getElementById("sheet").innerHTML = out.join("");
```
